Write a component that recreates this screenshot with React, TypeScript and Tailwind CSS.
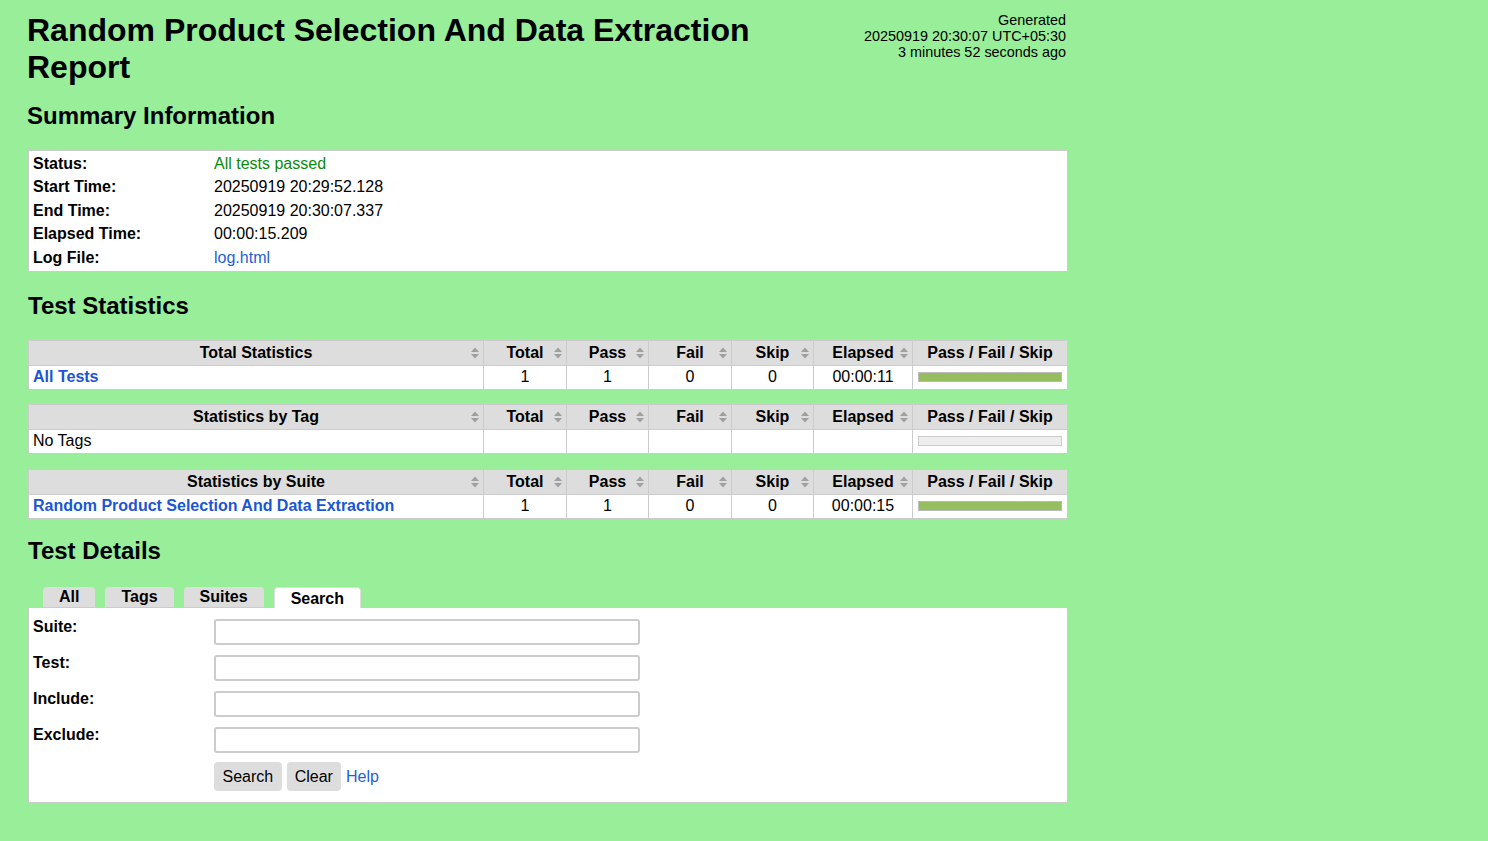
import React from "react";

const font = { fontFamily: '"Liberation Sans", Arial, Helvetica, sans-serif' };

const SortIcon = () => (
  <svg
    width="8"
    height="11"
    viewBox="0 0 8 11"
    className="absolute right-[4px] top-1/2 -translate-y-1/2"
  >
    <polygon points="4,0 8,4.5 0,4.5" fill="#a0a0a0" />
    <polygon points="0,6.5 8,6.5 4,11" fill="#a0a0a0" />
  </svg>
);

type Row = {
  name: string;
  link?: boolean;
  total: string;
  pass: string;
  fail: string;
  skip: string;
  elapsed: string;
  bar: "pass" | "empty";
};

const cols = [
  { key: "total", label: "Total", w: "w-[83px]" },
  { key: "pass", label: "Pass", w: "w-[82px]" },
  { key: "fail", label: "Fail", w: "w-[83px]" },
  { key: "skip", label: "Skip", w: "w-[82px]" },
  { key: "elapsed", label: "Elapsed", w: "w-[99px]" },
] as const;

const StatTable = ({ title, row, mb }: { title: string; row: Row; mb: string }) => (
  <div className={`w-[1040px] border border-[#cccccc] ${mb}`}>
    <div className="flex h-[25px] bg-[#dddddd] border-b border-[#cccccc] font-bold leading-[23px]">
      <div className="relative w-[455px] border-r border-[#cccccc] text-center">
        {title}
        <SortIcon />
      </div>
      {cols.map((c) => (
        <div
          key={c.key}
          className={`relative ${c.w} border-r border-[#cccccc] text-center`}
        >
          {c.label}
          <SortIcon />
        </div>
      ))}
      <div className="flex-1 text-center">Pass / Fail / Skip</div>
    </div>
    <div className="flex h-[23px] bg-white leading-[21px]">
      <div className="w-[455px] border-r border-[#cccccc] pl-[4px]">
        {row.link ? (
          <a className="font-bold text-[#1a56d6]">{row.name}</a>
        ) : (
          row.name
        )}
      </div>
      <div className="w-[83px] border-r border-[#cccccc] text-center">{row.total}</div>
      <div className="w-[82px] border-r border-[#cccccc] text-center">{row.pass}</div>
      <div className="w-[83px] border-r border-[#cccccc] text-center">{row.fail}</div>
      <div className="w-[82px] border-r border-[#cccccc] text-center">{row.skip}</div>
      <div className="w-[99px] border-r border-[#cccccc] text-center">{row.elapsed}</div>
      <div className="flex-1 flex items-center px-[5px] pb-[1px]">
        <div
          className={
            row.bar === "pass"
              ? "w-full h-[10px] border border-[#bbbbbb] bg-[#97bd61]"
              : "w-full h-[10px] border border-[#cccccc] bg-[#eeeeee]"
          }
        />
      </div>
    </div>
  </div>
);

const summary = [
  { label: "Status:", value: "All tests passed", cls: "text-[#0a8a0a]" },
  { label: "Start Time:", value: "20250919 20:29:52.128", cls: "" },
  { label: "End Time:", value: "20250919 20:30:07.337", cls: "" },
  { label: "Elapsed Time:", value: "00:00:15.209", cls: "" },
  { label: "Log File:", value: "log.html", cls: "text-[#1f5fd9]" },
];

const App = () => {
  return (
    <div
      className="min-h-screen bg-[#99ee99] text-black text-[16px] pl-[28px] pt-[12px] pb-[40px]"
      style={font}
    >
      <div className="w-[1039px] -ml-[1px] flex justify-between items-start">
        <h1 className="w-[780px] text-[32px] font-bold leading-[37px]">
          Random Product Selection And Data Extraction Report
        </h1>
        <div className="text-right text-[14.4px] leading-[16px] whitespace-nowrap">
          <div>Generated</div>
          <div>20250919 20:30:07 UTC+05:30</div>
          <div>3 minutes 52 seconds ago</div>
        </div>
      </div>

      <h2 className="-ml-[1px] mt-[16px] mb-[20px] text-[24px] font-bold leading-[28px]">
        Summary Information
      </h2>
      <div className="w-[1040px] border border-[#cccccc] bg-white pt-[0.5px] pb-[2px] pl-[4px]">
        {summary.map((s) => (
          <div key={s.label} className="flex h-[23.5px] leading-[23.5px]">
            <div className="w-[181px] font-bold">{s.label}</div>
            <div className={s.cls}>{s.value}</div>
          </div>
        ))}
      </div>

      <h2 className="mt-[20px] mb-[20px] text-[24px] font-bold leading-[28px]">
        Test Statistics
      </h2>
      <StatTable
        title="Total Statistics"
        mb="mb-[14px]"
        row={{
          name: "All Tests",
          link: true,
          total: "1",
          pass: "1",
          fail: "0",
          skip: "0",
          elapsed: "00:00:11",
          bar: "pass",
        }}
      />
      <StatTable
        title="Statistics by Tag"
        mb="mb-[15px]"
        row={{
          name: "No Tags",
          total: "",
          pass: "",
          fail: "",
          skip: "",
          elapsed: "",
          bar: "empty",
        }}
      />
      <StatTable
        title="Statistics by Suite"
        mb="mb-[14.5px]"
        row={{
          name: "Random Product Selection And Data Extraction",
          link: true,
          total: "1",
          pass: "1",
          fail: "0",
          skip: "0",
          elapsed: "00:00:15",
          bar: "pass",
        }}
      />

      <h2 className="mt-[18px] text-[24px] font-bold leading-[28px]">Test Details</h2>
      <div className="flex items-end pl-[15px] mt-[21px] h-[21px] font-bold">
        <div className="h-[20px] leading-[20px] px-[16px] bg-[#dddddd] rounded-t-[4px] mr-[10px]">
          All
        </div>
        <div className="h-[20px] leading-[20px] px-[16px] bg-[#dddddd] rounded-t-[4px] mr-[10px]">
          Tags
        </div>
        <div className="h-[20px] leading-[20px] px-[16px] bg-[#dddddd] rounded-t-[4px] mr-[10px]">
          Suites
        </div>
        <div className="relative -mb-[1px] h-[21px] leading-[22px] px-[16px] bg-white border border-b-0 border-[#dddddd] rounded-t-[4px]">
          Search
        </div>
      </div>
      <div className="w-[1040px] border border-[#cccccc] bg-white pl-[4px] pt-[10px] pb-[11px]">
        {["Suite:", "Test:", "Include:", "Exclude:"].map((l) => (
          <div key={l} className="flex h-[36px]">
            <div className="w-[181px] font-bold leading-[18px]">{l}</div>
            <input
              type="text"
              className="mt-[1px] w-[426px] h-[26px] border-2 border-[#cccccc] rounded-[3px] bg-white outline-none"
            />
          </div>
        ))}
        <div className="flex items-center ml-[181px] h-[29px]">
          <button className="h-[29px] px-[8.5px] bg-[#dddddd] rounded-[4px] mr-[5px]">
            Search
          </button>
          <button className="h-[29px] px-[8px] bg-[#dddddd] rounded-[4px] mr-[5px]">
            Clear
          </button>
          <a className="text-[#1f5fd9]">Help</a>
        </div>
      </div>
    </div>
  );
};

export default App;
